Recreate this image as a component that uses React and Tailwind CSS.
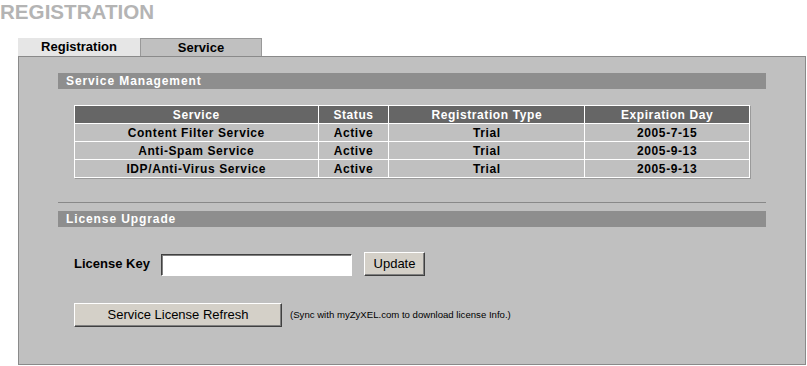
import React from "react";

const services = [
  { name: "Content Filter Service", status: "Active", type: "Trial", expires: "2005-7-15" },
  { name: "Anti-Spam Service", status: "Active", type: "Trial", expires: "2005-9-13" },
  { name: "IDP/Anti-Virus Service", status: "Active", type: "Trial", expires: "2005-9-13" },
];

function SectionBar({ title }) {
  return (
    <div className="w-[708px] h-[16px] bg-[#8e8e8e] pl-2 text-white text-[12px] leading-[16px] font-bold tracking-[0.9px]">
      {title}
    </div>
  );
}

const btn =
  "bg-[#d4d0c8] text-black text-[13px] border border-t-white border-l-white border-r-[#404040] border-b-[#404040] shadow-[inset_-1px_-1px_0_#808080]";

export default function App() {
  return (
    <div className="w-[807px] h-[366px] bg-white font-['Liberation_Sans',Arial,sans-serif] overflow-hidden">
      {/* TITLE */}
      <h1 className="text-[20.6px] leading-[23px] font-bold text-[#b4b4b4]">
        REGISTRATION
      </h1>

      {/* TABS */}
      <div className="flex ml-[18px] mt-[15px] h-[18px]">
        <div className="w-[122px] bg-[#e6e6e6] text-[13px] leading-[18px] font-bold text-center text-black">
          Registration
        </div>
        <div className="w-[122px] bg-[#c0c0c0] border border-b-0 border-[#999] text-[13px] leading-[17px] font-bold text-center text-black">
          Service
        </div>
      </div>

      {/* PANEL */}
      <div className="ml-[18px] w-[788px] h-[309px] bg-[#c0c0c0] border border-[#8a8a8a] pt-[16px] pl-[39px]">
        <SectionBar title="Service Management" />

        <table className="mt-[16px] ml-[16px] w-[676px] border-collapse border border-white shadow-[1px_1px_0_#9a9a9a] text-[12px] font-bold tracking-[0.6px] text-center">
          <thead>
            <tr className="bg-[#666666] text-white h-[18px]">
              <th className="w-[244px] border border-white p-0 leading-[16px]">Service</th>
              <th className="w-[71px] border border-white p-0 leading-[16px]">Status</th>
              <th className="w-[196px] border border-white p-0 leading-[16px]">Registration Type</th>
              <th className="w-[165px] border border-white p-0 leading-[16px]">Expiration Day</th>
            </tr>
          </thead>
          <tbody>
            {services.map((s) => (
              <tr key={s.name} className="h-[18px] text-black">
                <td className="border border-white p-0 leading-[16px]">{s.name}</td>
                <td className="border border-white p-0 leading-[16px]">{s.status}</td>
                <td className="border border-white p-0 leading-[16px]">{s.type}</td>
                <td className="border border-white p-0 leading-[16px]">{s.expires}</td>
              </tr>
            ))}
          </tbody>
        </table>

        {/* DIVIDER */}
        <div className="mt-[24px] w-[708px] h-px bg-[#888888]"></div>

        <div className="mt-[8px]">
          <SectionBar title="License Upgrade" />
        </div>

        {/* LICENSE KEY */}
        <div className="flex items-center mt-[25px] ml-[16px] h-[24px]">
          <span className="text-[13px] font-bold text-black w-[87px]">License Key</span>
          <input
            type="text"
            className="w-[191px] h-[22px] mt-[2px] bg-white border border-t-[#404040] border-l-[#404040] border-r-white border-b-white shadow-[inset_1px_1px_0_#808080] outline-none"
          />
          <button className={`${btn} ml-[12px] w-[61px] h-[24px]`}>Update</button>
        </div>

        {/* REFRESH */}
        <div className="flex items-center mt-[27px] ml-[16px] h-[24px]">
          <button className={`${btn} w-[208px] h-[24px]`}>Service License Refresh</button>
          <span className="ml-[8px] text-[9.6px] text-black">
            (Sync with myZyXEL.com to download license Info.)
          </span>
        </div>
      </div>
    </div>
  );
}
